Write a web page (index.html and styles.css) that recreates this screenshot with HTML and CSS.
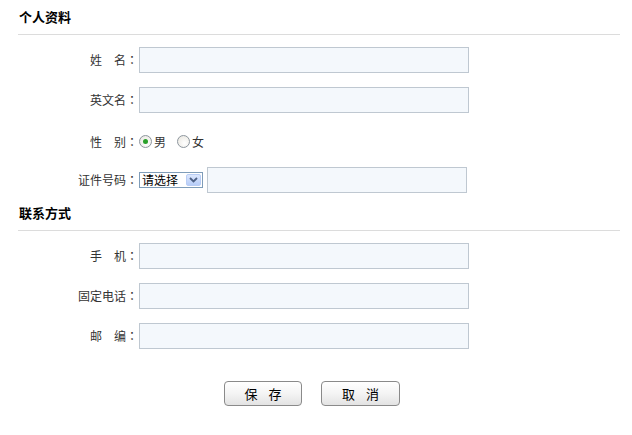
FILE: index.html
```html
<!DOCTYPE html>
<html lang="zh-CN">
<head>
<meta charset="utf-8">
<title>个人资料</title>
<link rel="stylesheet" href="styles.css">
</head>
<body>
<div class="page">
  <section class="block">
    <h2 class="title">个人资料</h2>
    <div class="rows">
      <div class="row"><span class="lbl">姓　名<span class="colon">：</span></span><input class="txt" type="text"></div>
      <div class="row"><span class="lbl">英文名<span class="colon">：</span></span><input class="txt" type="text"></div>
      <div class="row row-radio"><span class="lbl">性　别<span class="colon">：</span></span>
        <label class="opt"><span class="radio checked"></span>男</label>
        <label class="opt"><span class="radio"></span>女</label>
      </div>
      <div class="row"><span class="lbl">证件号码<span class="colon">：</span></span>
        <span class="select"><span class="sel-text">请选择</span><span class="sel-btn"><svg width="9" height="6" viewBox="0 0 9 6"><path d="M1 1 L4.5 4.5 L8 1" fill="none" stroke="#4d6185" stroke-width="1.8"/></svg></span></span>
        <input class="txt txt-short" type="text">
      </div>
    </div>
  </section>
  <section class="block block-2">
    <h2 class="title">联系方式</h2>
    <div class="rows">
      <div class="row"><span class="lbl">手　机<span class="colon">：</span></span><input class="txt" type="text"></div>
      <div class="row"><span class="lbl">固定电话<span class="colon">：</span></span><input class="txt" type="text"></div>
      <div class="row"><span class="lbl">邮　编<span class="colon">：</span></span><input class="txt" type="text"></div>
    </div>
  </section>
  <div class="actions">
    <button class="btn" type="button">保 存</button>
    <button class="btn" type="button">取 消</button>
  </div>
</div>
</body>
</html>
```
FILE: styles.css
```css
html, body {
  margin: 0;
  padding: 0;
  background: #fff;
}
body {
  font-family: "Noto Sans CJK SC", "Noto Sans", sans-serif;
  font-size: 12px;
  color: #333;
}
.page {
  width: 602px;
  padding: 0 12px 0 18px;
}
.title {
  margin: 0;
  padding: 8px 0 9px 1px;
  font-size: 13px;
  line-height: 17px;
  font-weight: bold;
  color: #000;
  border-bottom: 1px solid #dcdcdc;
}
.block-2 {
  margin-top: 3px;
}
.rows {
  display: flex;
  flex-direction: column;
  gap: 14px;
  padding-top: 12px;
}
.row {
  display: flex;
  align-items: center;
  height: 26px;
}
.row-radio {
  padding-top: 3px;
  box-sizing: border-box;
}
.lbl {
  width: 121px;
  text-align: right;
  line-height: 16px;
  color: #333;
  flex: none;
}
.colon {
  display: inline-block;
  width: 12px;
  margin-right: 1px;
  text-align: center;
  font-family: "Noto Sans CJK TC", sans-serif;
}
.txt {
  box-sizing: border-box;
  width: 330px;
  height: 26px;
  margin: 0;
  padding: 0 4px;
  border: 1px solid #bfc8d1;
  background: #f4f8fc;
  font: inherit;
  outline: none;
}
.txt-short {
  width: 260px;
  margin-left: 4px;
}
.opt {
  display: flex;
  align-items: center;
  margin-right: 11px;
  color: #333;
}
.radio {
  box-sizing: border-box;
  width: 13px;
  height: 13px;
  border-radius: 50%;
  border: 1px solid #8d969e;
  background: radial-gradient(circle at 60% 65%, #ffffff 0%, #eceae4 80%);
  margin-right: 2px;
  position: relative;
}
.radio.checked::after {
  content: "";
  position: absolute;
  left: 3px;
  top: 3px;
  width: 5px;
  height: 5px;
  border-radius: 50%;
  background: #2aa02a;
}
.select {
  box-sizing: border-box;
  display: flex;
  align-items: center;
  width: 64px;
  height: 16px;
  border: 1px solid #7f9db9;
  background: #fff;
  color: #000;
}
.sel-text {
  flex: 1;
  padding-left: 2px;
  line-height: 14px;
  font-size: 12px;
}
.sel-btn {
  display: flex;
  align-items: center;
  justify-content: center;
  width: 15px;
  height: 12px;
  margin-right: 1px;
  border: 1px solid #b9cdf5;
  border-radius: 2px;
  box-sizing: border-box;
  background: linear-gradient(#dce7fd, #b7cdf8);
}
.actions {
  display: flex;
  gap: 19px;
  padding-left: 206px;
  margin-top: 32px;
}
.btn {
  box-sizing: border-box;
  width: 78px;
  height: 25px;
  margin: 0;
  padding: 0 0 0 4px;
  border: 1px solid #8a8a8a;
  border-radius: 4px;
  background: linear-gradient(#ffffff 0%, #f4f4f4 50%, #e3e3e3 100%);
  font-family: "Noto Sans CJK SC", sans-serif;
  font-size: 13px;
  letter-spacing: 4px;
  color: #000;
  cursor: pointer;
}
.btn + .btn {
  width: 79px;
}
```
